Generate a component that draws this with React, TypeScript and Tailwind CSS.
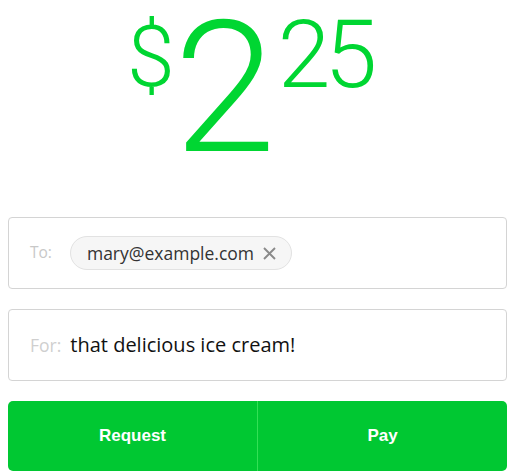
import React from 'react';

const App: React.FC = () => {
  return (
    <div className="w-[508px] h-[476px] bg-white pl-2 pr-px font-['Open_Sans',sans-serif]">
      {/* Amount */}
      <div className="flex justify-center items-start h-[217px] pr-[17px] text-[#00d632] font-['Roboto',sans-serif] font-light">
        <span className="text-[86px] leading-[1.2] mt-[5px]">$</span>
        <span className="text-[184px] leading-[1.2] -mt-[22px] -ml-[1px]">2</span>
        <span className="text-[95px] leading-[1.2] -mt-[2px] ml-[2px] tracking-[-6px]">25</span>
      </div>

      {/* To */}
      <div className="h-[72px] border border-[#d4d4d4] rounded-[4px] flex items-center pl-[21px]">
        <span className="text-[15.5px] text-[#c8c8c8] mr-[18px]">To:</span>
        <div className="flex items-center h-[34px] pl-[16px] pr-[15px] rounded-full bg-[#f6f6f6] border border-[#e2e2e2]">
          <span className="text-[17.5px] text-[#333]">mary@example.com</span>
          <svg className="ml-[9px]" width="13" height="13" viewBox="0 0 13 13">
            <path d="M1 1L12 12M12 1L1 12" stroke="#8a8a8a" strokeWidth="1.9" fill="none" />
          </svg>
        </div>
      </div>

      {/* For */}
      <div className="mt-[20px] h-[72px] border border-[#d4d4d4] rounded-[4px] flex items-center pl-[21px]">
        <span className="text-[17.5px] text-[#cfcfcf] mr-[9px]">For:</span>
        <span className="text-[20px] text-[#111]">that delicious ice cream!</span>
      </div>

      {/* Buttons */}
      <div className="mt-[20px] h-[70px] rounded-[5px] bg-[#00c832] flex font-['Liberation_Sans',sans-serif] font-bold text-white text-[17px]">
        <div className="flex-1 flex items-center justify-center">Request</div>
        <div className="w-px bg-[#33e055]"></div>
        <div className="flex-1 flex items-center justify-center">Pay</div>
      </div>
    </div>
  );
};

export default App;
